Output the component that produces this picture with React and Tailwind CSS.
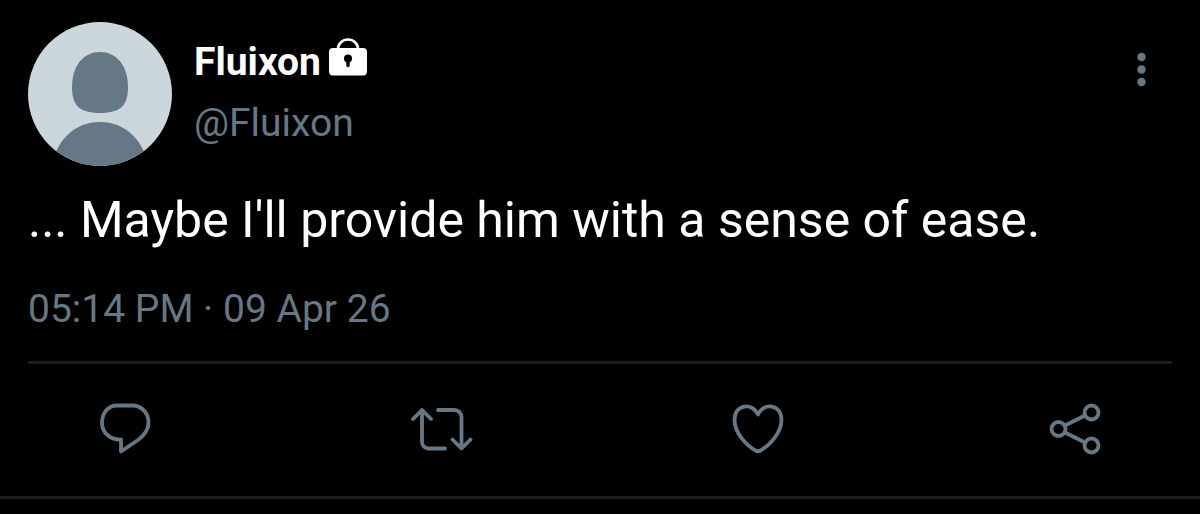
function Avatar() {
  return (
    <svg viewBox="0 0 144 144" className="size-36 shrink-0" role="img" aria-label="Fluixon's avatar">
      <clipPath id="avatar-clip">
        <circle cx="72" cy="72" r="72" />
      </clipPath>
      <g clipPath="url(#avatar-clip)">
        <rect width="144" height="144" fill="#ccd6dd" />
        <path
          d="M72 30C88 30 100 43 100 65C100 82 94 91 72 91C50 91 44 82 44 65C44 43 56 30 72 30Z"
          fill="#667785"
        />
        <path d="M24 144C28 119 46 100 72 100C98 100 116 119 120 144Z" fill="#667785" />
      </g>
    </svg>
  );
}

function LockIcon() {
  return (
    <svg viewBox="0 0 38 38" className="size-[38px] shrink-0" role="img" aria-label="Protected account">
      <path d="M9 12V11A10 9.5 0 0 1 29 11V12" fill="none" stroke="#fff" strokeWidth="2.6" />
      <rect y="10" width="38" height="27.500" rx="4" fill="#fff" />
      <circle cx="19" cy="20.500" r="4" fill="#000" />
      <path d="M17.300 22h3.400v5.500a1.700 1.700 0 0 1-3.400 0Z" fill="#000" />
    </svg>
  );
}

function ActionButton({ label, children }) {
  return (
    <button type="button" aria-label={label} className="size-16">
      <svg
        viewBox="0 0 64 64"
        className="size-16"
        fill="none"
        stroke="currentColor"
        strokeWidth="3.800"
        strokeLinecap="round"
        strokeLinejoin="round"
        aria-hidden="true"
      >
        {children}
      </svg>
    </button>
  );
}

export default function App() {
  return (
    <main className="min-h-screen bg-black font-['Roboto',sans-serif] text-[#667785]">
      <article className="border-b-3 border-[#1c1c1c] px-7 pt-[22px] pb-[35px]">
        <header className="flex items-start">
          <Avatar />
          <div className="ml-[22px] flex flex-col pt-4">
            <div className="flex items-start gap-2">
              <h1 className="text-[39px] leading-[48px] font-bold text-white">Fluixon</h1>
              <LockIcon />
            </div>
            <a href="#profile" className="mt-3.5 text-[39px] leading-[46px]">
              @Fluixon
            </a>
          </div>
          <button type="button" aria-label="More options" className="mt-6 ml-auto h-12 w-[61px]">
            <svg viewBox="0 0 61 48" className="h-12 w-[61px]" fill="currentColor" aria-hidden="true">
              <circle cx="30.500" cy="11" r="4.200" />
              <circle cx="30.500" cy="23.500" r="4.200" />
              <circle cx="30.500" cy="36" r="4.200" />
            </svg>
          </button>
        </header>

        <p className="mt-[25px] text-[50px] leading-[58px] text-white">
          ... Maybe I'll provide him with a sense of ease.
        </p>
        <time dateTime="2026-04-09T17:14" className="mt-[37px] block text-[39px] leading-[46px]">
          05:14 PM · 09 Apr 26
        </time>

        <footer className="mt-[29px] flex justify-between border-t-3 border-[#1c1c1c] px-16 pt-[33px]">
          <ActionButton label="Reply">
            <path d="M25 8.500H42A16 17 0 0 1 56.500 25.500C56.500 33 52 38.500 46 43L29 54.500V42.500C18 43 10 35.500 10 26C10 16 16 8.500 25 8.500Z" />
          </ActionButton>
          <ActionButton label="Retweet">
            <path d="M4 22L13 13L22 22M13 13V45A6.500 6.500 0 0 0 19.500 51.500H36M29 13H45.500A7 7 0 0 1 52.500 20V51M43.500 42.500L52.500 51.500L61.500 42.500" />
          </ActionButton>
          <ActionButton label="Like">
            <path d="M31 17.500C26 5.500 7.500 6.500 7.500 23C7.500 36 20 49 28.500 53.500Q31 55 33.500 53.500C42 49 54.500 36 54.500 23C54.500 6.500 36 5.500 31 17.500Z" />
          </ActionButton>
          <ActionButton label="Share">
            <circle cx="14.500" cy="32" r="7" />
            <circle cx="47.500" cy="15.500" r="7" />
            <circle cx="47.500" cy="48.500" r="7" />
            <path d="M21 28.500L41 18.500M21 35.500L41 45.500" />
          </ActionButton>
        </footer>
      </article>
    </main>
  );
}
